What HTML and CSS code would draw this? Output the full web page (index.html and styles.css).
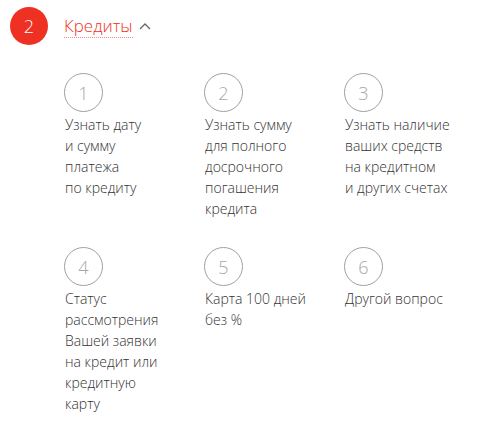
FILE: index.html
```html
<!DOCTYPE html>
<html lang="ru">
<head>
<meta charset="utf-8">
<link rel="stylesheet" href="styles.css">
</head>
<body>
<div class="section">
  <div class="head">
    <div class="badge">2</div>
    <span class="title">Кредиты</span>
    <svg class="caret" width="12" height="8" viewBox="0 0 12 8"><path d="M1 7 L6 2 L11 7" fill="none" stroke="#666" stroke-width="1.3"/></svg>
  </div>
  <div class="grid">
    <div class="item"><div class="num">1</div><div class="text">Узнать дату<br>и сумму<br>платежа<br>по кредиту</div></div>
    <div class="item"><div class="num">2</div><div class="text">Узнать сумму<br>для полного<br>досрочного<br>погашения<br>кредита</div></div>
    <div class="item"><div class="num">3</div><div class="text">Узнать наличие<br>ваших средств<br>на кредитном<br>и других счетах</div></div>
    <div class="item"><div class="num">4</div><div class="text">Статус<br>рассмотрения<br>Вашей заявки<br>на кредит или<br>кредитную<br>карту</div></div>
    <div class="item"><div class="num">5</div><div class="text">Карта 100 дней<br>без %</div></div>
    <div class="item"><div class="num">6</div><div class="text">Другой вопрос</div></div>
  </div>
</div>
</body>
</html>
```
FILE: styles.css
```css
html, body {
  margin: 0;
  padding: 0;
  background: #fff;
}
body {
  font-family: "Open Sans", "Liberation Sans", sans-serif;
  font-weight: 300;
  color: #333;
}
.section {
  padding: 7px 0 0 10px;
}
.head {
  display: flex;
  align-items: center;
  height: 38px;
}
.badge {
  width: 38px;
  height: 38px;
  border-radius: 50%;
  background: #ef3124;
  color: #fff;
  font-size: 18px;
  display: flex;
  align-items: center;
  justify-content: center;
}
.title {
  margin-left: 16px;
  color: #ef3124;
  font-size: 17px;
  line-height: 22px;
  border-bottom: 1px dotted #f08a82;
}
.caret {
  margin-left: 6px;
}
.grid {
  display: grid;
  grid-template-columns: repeat(3, 140px);
  row-gap: 28px;
  margin: 28px 0 0 54px;
}
.num {
  width: 37px;
  height: 37px;
  border: 1px solid #a0a0a0;
  border-radius: 50%;
  color: #a8a8a8;
  font-size: 18px;
  display: flex;
  align-items: center;
  justify-content: center;
  margin-bottom: 2px;
}
.text {
  font-size: 14px;
  line-height: 21px;
  margin-left: 1px;
}
```
